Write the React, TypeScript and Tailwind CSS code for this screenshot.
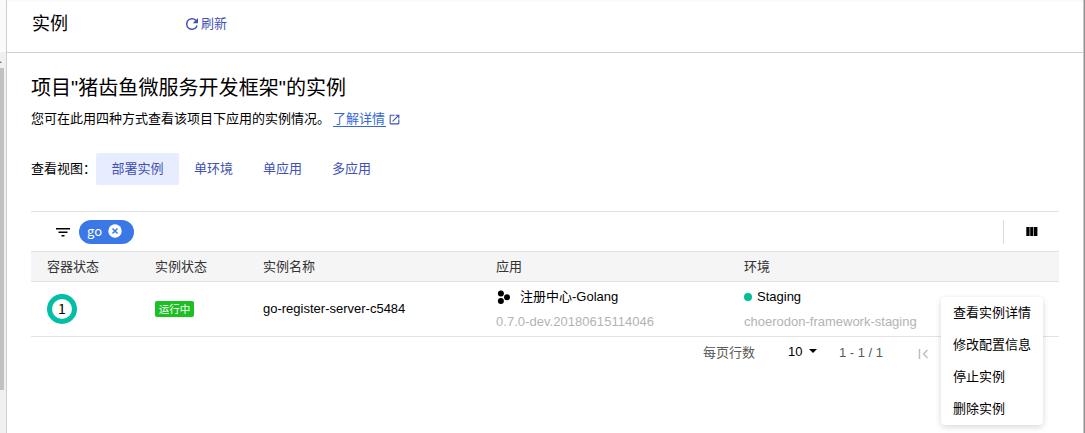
import React from "react";

const views = [
  { label: "部署实例", active: true },
  { label: "单环境" },
  { label: "单应用" },
  { label: "多应用" },
];

const actions = ["查看实例详情", "修改配置信息", "停止实例", "删除实例"];

const rowGrid = "grid grid-cols-[108px_108px_233px_248px_1fr] pl-4";

function RefreshIcon() {
  return (
    <svg width="18" height="18" viewBox="0 0 24 24" fill="#3f51b5">
      <path d="M17.65 6.35A7.96 7.96 0 0 0 12 4a8 8 0 1 0 7.73 10h-2.08A6 6 0 1 1 12 6c1.66 0 3.14.69 4.22 1.78L13 11h7V4z" />
    </svg>
  );
}

function OpenInNewIcon() {
  return (
    <svg width="13" height="13" viewBox="0 0 24 24" fill="#3f51b5">
      <path d="M19 19H5V5h7V3H5a2 2 0 0 0-2 2v14a2 2 0 0 0 2 2h14c1.1 0 2-.9 2-2v-7h-2zM14 3v2h3.59l-9.83 9.83 1.41 1.41L19 6.41V10h2V3z" />
    </svg>
  );
}

function Header() {
  return (
    <header className="flex h-[53px] items-start border-b border-[#cfcfcf] pl-[25px] pt-2.5">
      <h1 className="w-[151px] text-lg leading-7">实例</h1>
      <button className="flex items-center text-[13px] leading-[26px] text-[#3f51b5]">
        <RefreshIcon />
        <span className="pt-px">刷新</span>
      </button>
    </header>
  );
}

function Toolbar() {
  return (
    <div className="flex h-[41px] items-center border-y border-[#e0e0e0] pl-6">
      <svg width="16" height="16" viewBox="0 0 16 16">
        <path d="M1 4h14v1.6H1zM3.5 7.5h9v1.6h-9zM6.5 11h3v1.6h-3z" />
      </svg>
      <div className="ml-2 flex h-6 w-[55px] items-center rounded-xl bg-[#3b78e7] pl-2 font-['Noto_Sans_CJK_SC',sans-serif] text-[13px] leading-6 text-white">
        <span className="-mt-0.5 w-[22px]">go</span>
        <svg className="-mt-px -ml-px" width="14" height="14" viewBox="0 0 14 14">
          <circle cx="7" cy="7" r="6.7" fill="#fff" />
          <path d="M4.5 4.5l5 5m0-5l-5 5" stroke="#3b78e7" strokeWidth="1.5" />
        </svg>
      </div>
      <div className="ml-auto h-6 w-[56px] border-l border-[#dcdcdc] pl-[22px] pt-[7px]">
        <svg width="12" height="9" viewBox="0 0 12 9">
          <path d="M0.3 0h3.3v9H.3zM4.2 0h3.2v9H4.2zM8 0h3.4v9H8z" />
        </svg>
      </div>
    </div>
  );
}

function ActionMenu() {
  return (
    <ul className="absolute left-[910px] top-[86px] h-[128px] w-[102px] rounded-sm bg-white text-[13px] leading-8 shadow-[0_2px_6px_rgba(0,0,0,0.16)]">
      {actions.map((a) => (
        <li key={a} className="h-8 pl-3">{a}</li>
      ))}
    </ul>
  );
}

function InstanceTable() {
  return (
    <section className="relative">
      <Toolbar />
      <div className={`${rowGrid} h-[30px] border-b border-[#e3e3e3] bg-[#f5f5f5] leading-[29px] text-[#333]`}>
        <span>容器状态</span>
        <span>实例状态</span>
        <span>实例名称</span>
        <span>应用</span>
        <span>环境</span>
      </div>
      <div className={`${rowGrid} h-[55px] items-center border-b border-[#e3e3e3]`}>
        <div className="flex size-[30px] items-center justify-center rounded-full border-[5px] border-[#00bfa5] pb-0.5 font-['Noto_Sans_CJK_SC',sans-serif] text-sm leading-[18px]">
          1
        </div>
        <div>
          <span className="flex h-4 w-[39px] items-center justify-center rounded-xs bg-[#1bc123] text-[10.5px] leading-4 text-white">运行中</span>
        </div>
        <span>go-register-server-c5484</span>
        <div className="leading-[25px]">
          <div className="flex items-center">
            <svg className="ml-px mr-2.5" width="13" height="14" viewBox="0 0 13 14">
              <circle cx="3.9" cy="3.5" r="3" />
              <circle cx="10" cy="7.2" r="3" />
              <circle cx="3.9" cy="11" r="3" />
            </svg>
            <span>注册中心-Golang</span>
          </div>
          <div className="tracking-[0.04px] text-[#b3b3b3]">0.7.0-dev.20180615114046</div>
        </div>
        <div className="leading-[25px]">
          <div className="flex items-center gap-[5px]">
            <i className="size-2 rounded-full bg-[#00bf96]" />
            <span>Staging</span>
          </div>
          <div className="text-[#b3b3b3]">choerodon-framework-staging</div>
        </div>
      </div>
      <footer className="flex h-8 items-center pl-[672px] text-[#595959]">
        <span className="w-[85px]">每页行数</span>
        <span className="-mt-0.5 flex w-[51px] items-center gap-[7px] text-black">
          10
          <svg className="-mt-0.5" width="8" height="4" viewBox="0 0 8 4"><path d="M0 0h8L4 4z" /></svg>
        </span>
        <span className="w-[79px]">1 - 1 / 1</span>
        <svg className="mt-px" width="11" height="10" viewBox="0 0 11 10" fill="none" stroke="#bfbfbf" strokeWidth="1.5">
          <path d="M1.5 0v10M9.5 1L5.5 5l4 4" />
        </svg>
      </footer>
      <ActionMenu />
    </section>
  );
}

export default function App() {
  return (
    <div className="flex h-[433px] w-[1085px] overflow-hidden bg-white font-['Liberation_Sans','Noto_Sans_CJK_SC',sans-serif] text-[13px] text-black">
      <aside className="flex w-[7px] shrink-0 flex-col border-r border-[#cfcfcf] bg-[#f0f0f0]">
        <div className="h-[52px] bg-[#fafafa]" />
        <div className="h-4 pt-[9px]">
          <svg width="2" height="2" viewBox="0 0 2 2"><path d="M0 0l2 2H0z" fill="#777" /></svg>
        </div>
        <div className="h-[322px] w-1 bg-[#c1c1c1]" />
      </aside>
      <div className="min-w-0 grow border-t-2 border-[#fafafa]">
        <div className="-mt-0.5">
          <Header />
        </div>
        <main className="px-6 pt-[21px]">
          <h2 className="text-xl leading-7 tracking-[0.05px]">项目"猪齿鱼微服务开发框架"的实例</h2>
          <p className="mt-2 flex h-[18px] items-start leading-[18px]">
            <span>您可在此用四种方式查看该项目下应用的实例情况。</span>
            <a className="ml-[3px] flex items-start text-[#3367d6]">
              <span className="h-[17px] w-[53px] border-b border-[#3367d6]">了解详情</span>
              <span className="ml-0.5 pt-[3px]"><OpenInNewIcon /></span>
            </a>
          </p>
          <nav className="mt-[25px] mb-[26px] flex h-8 items-center leading-8">
            <span className="w-[65px]">查看视图：</span>
            {views.map((v) => (
              <button
                key={v.label}
                className={v.active ? "h-8 rounded-xs bg-[#e8ecff] px-[15.5px] text-[#3f51b5]" : "px-[15px] text-[#3f51b5]"}
              >
                {v.label}
              </button>
            ))}
          </nav>
          <InstanceTable />
        </main>
      </div>
      <div className="w-0.5 shrink-0 border-l border-[#c8c8c8] bg-[#909090]" />
    </div>
  );
}
